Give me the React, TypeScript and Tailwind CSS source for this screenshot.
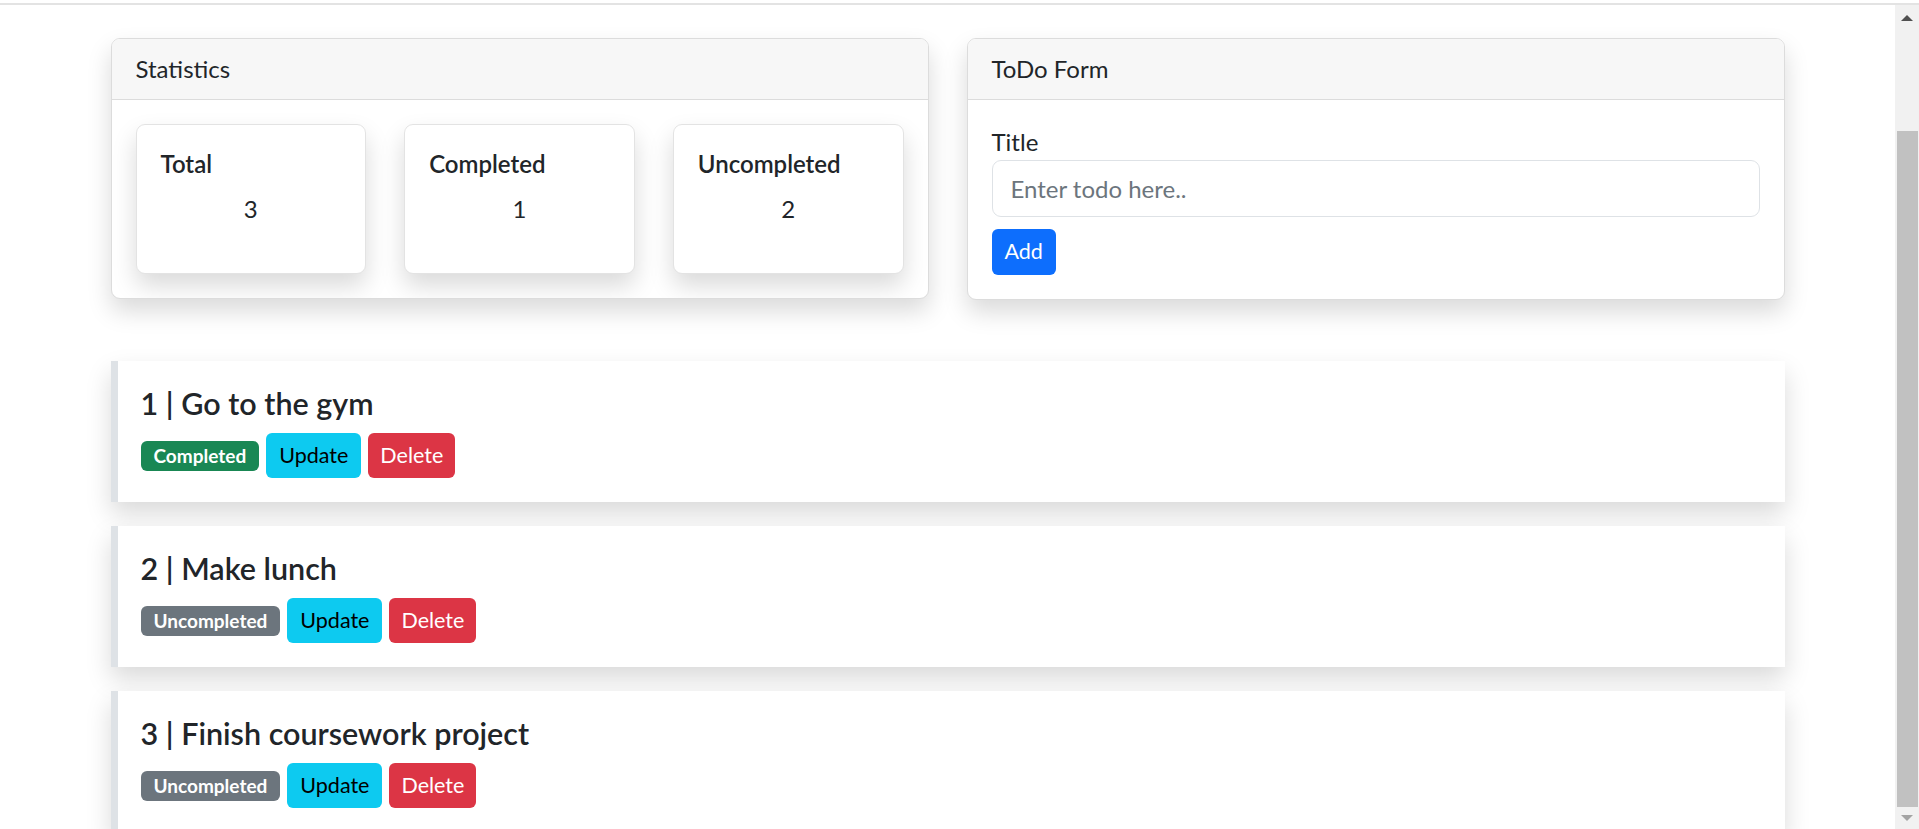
import React from 'react';

type Todo = { id: number; title: string; completed: boolean };

const todos: Todo[] = [
  { id: 1, title: 'Go to the gym', completed: true },
  { id: 2, title: 'Make lunch', completed: false },
  { id: 3, title: 'Finish coursework project', completed: false },
];

function StatCard({ label, value }: { label: string; value: number }) {
  return (
    <div className="h-[150px] rounded-[9px] border-[1.5px] border-[#e3e3e3] bg-white p-[24px] shadow-[0_12px_24px_rgba(0,0,0,0.15)]">
      <div className="mb-[12px] text-[24px] font-semibold leading-[30px] text-[#212529]">{label}</div>
      <div className="text-center text-[24px] leading-[36px] text-[#212529]">{value}</div>
    </div>
  );
}

function TodoCard({ todo }: { todo: Todo }) {
  return (
    <div className="mb-[24px] h-[141px] border-l-[7px] border-[#dee2e6] bg-white p-[24px] pl-[23px] shadow-[0_12px_24px_rgba(0,0,0,0.15)]">
      <div className="mb-[12px] text-[30.5px] font-semibold leading-[36px] text-[#212529]">
        {todo.id} | {todo.title}
      </div>
      <div className="flex items-center gap-[7px]">
        {todo.completed ? (
          <span className="flex h-[30px] items-center rounded-[6px] bg-[#198754] px-[13px] text-[19px] font-bold leading-none text-white">
            Completed
          </span>
        ) : (
          <span className="flex h-[30px] items-center rounded-[6px] bg-[#6c757d] px-[13px] text-[19px] font-bold leading-none text-white">
            Uncompleted
          </span>
        )}
        <button className="h-[45px] rounded-[6px] bg-[#0dcaf0] px-[13px] text-[21.5px] leading-none text-black">
          Update
        </button>
        <button className="h-[45px] rounded-[6px] bg-[#dc3545] px-[12px] text-[21.5px] leading-none text-white">
          Delete
        </button>
      </div>
    </div>
  );
}

function Scrollbar() {
  return (
    <div className="flex w-[24px] flex-col bg-[#f1f1f1]">
      <div className="flex h-[26px] items-center justify-center">
        <div className="h-0 w-0 border-x-[6px] border-b-[6px] border-x-transparent border-b-[#505050]" />
      </div>
      <div className="h-[100px]" />
      <div className="ml-[2px] mr-[1px] flex-1 bg-[#c1c1c1]" />
      <div className="flex h-[22px] items-center justify-center">
        <div className="h-0 w-0 border-x-[6px] border-t-[6px] border-x-transparent border-t-[#a3a3a3]" />
      </div>
    </div>
  );
}

export default function App() {
  return (
    <div
      className="flex h-[829px] w-full flex-col overflow-hidden bg-white text-[#212529]"
      style={{ fontFamily: 'Lato, "Noto Sans", sans-serif' }}
    >
      <div className="h-[3px] bg-white" />
      <div className="h-[2px] bg-[#e3e3e3]" />
      <div className="flex min-h-0 flex-1">
        <main className="min-w-0 flex-1 overflow-hidden pt-[33px]">
          <div className="mx-auto w-[1674px]">
            <div className="grid grid-cols-2 items-start gap-[38px]">
              {/* Statistics */}
              <div className="overflow-hidden rounded-[9px] border-[1.5px] border-[#dcdcdc] bg-white shadow-[0_12px_24px_rgba(0,0,0,0.15)]">
                <div className="h-[61px] border-b-[1.5px] border-[#dcdcdc] bg-[#f7f7f7] px-[24px] py-[12px] text-[24px] leading-[36px]">
                  Statistics
                </div>
                <div className="grid grid-cols-3 gap-[38px] p-[24px]">
                  <StatCard label="Total" value={3} />
                  <StatCard label="Completed" value={1} />
                  <StatCard label="Uncompleted" value={2} />
                </div>
              </div>

              {/* ToDo Form */}
              <div className="overflow-hidden rounded-[9px] border-[1.5px] border-[#dcdcdc] bg-white shadow-[0_12px_24px_rgba(0,0,0,0.15)]">
                <div className="h-[61px] border-b-[1.5px] border-[#dcdcdc] bg-[#f7f7f7] px-[24px] py-[12px] text-[24px] leading-[36px]">
                  ToDo Form
                </div>
                <div className="p-[24px]">
                  <label className="block text-[24px] leading-[36px]">Title</label>
                  <input
                    type="text"
                    placeholder="Enter todo here.."
                    className="block h-[57px] w-full rounded-[9px] border-[1.5px] border-[#dee2e6] px-[18px] text-[24px] text-[#212529] outline-none placeholder:text-[#6c757d]"
                  />
                  <button className="mt-[12px] h-[46px] rounded-[6px] bg-[#0d6efd] px-[13px] text-[21.5px] leading-none text-white">
                    Add
                  </button>
                </div>
              </div>
            </div>

            <div className="mt-[61px]">
              {todos.map((todo) => (
                <TodoCard key={todo.id} todo={todo} />
              ))}
            </div>
          </div>
        </main>
        <Scrollbar />
      </div>
    </div>
  );
}
